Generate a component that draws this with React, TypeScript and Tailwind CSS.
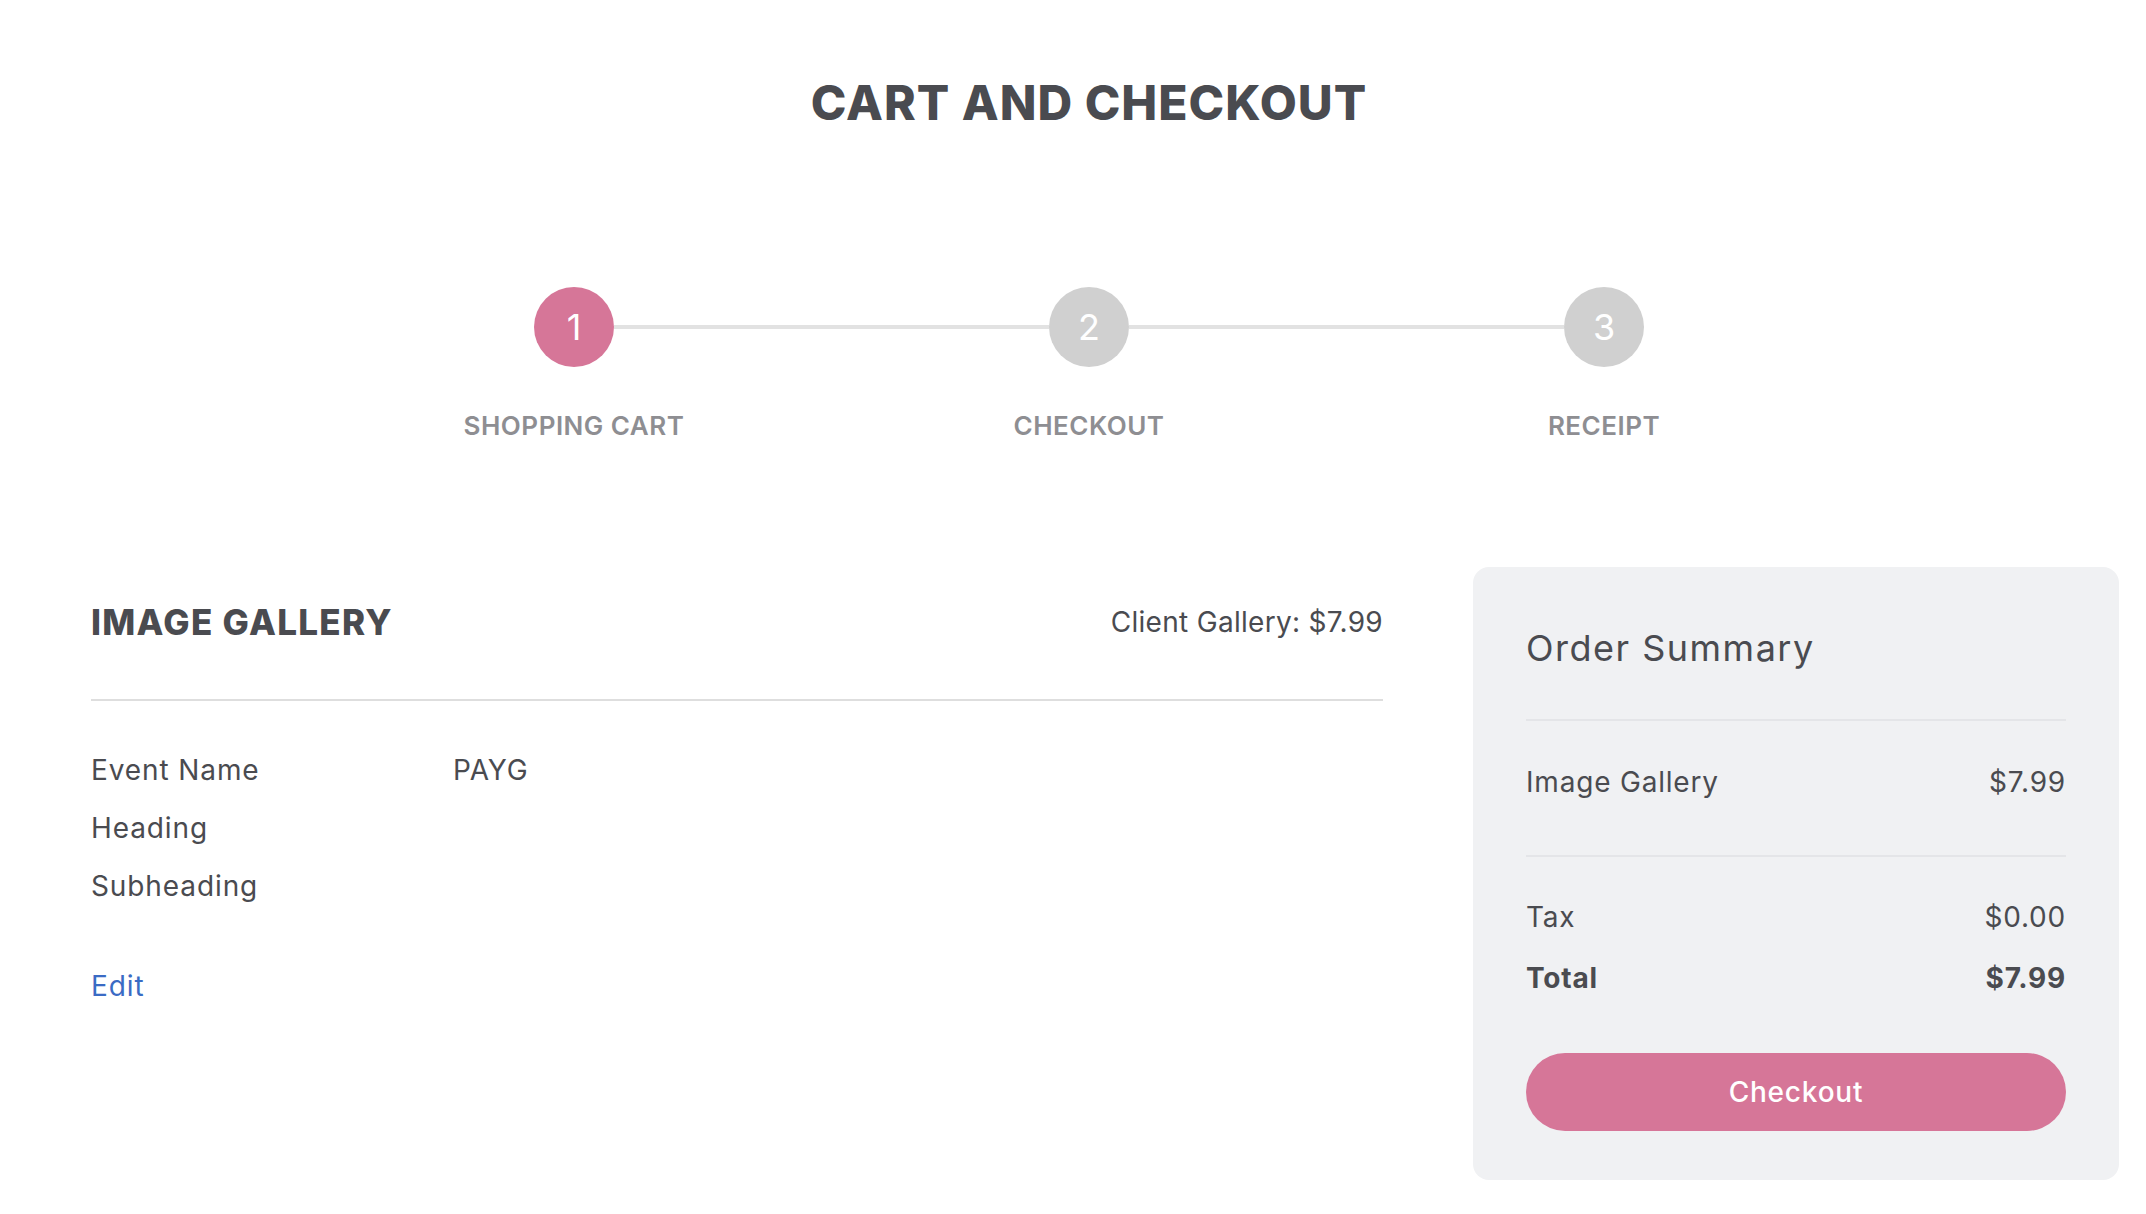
import React from 'react';

const steps = [
  { n: 1, label: 'SHOPPING CART', active: true },
  { n: 2, label: 'CHECKOUT', active: false },
  { n: 3, label: 'RECEIPT', active: false },
];

const details = [
  { label: 'Event Name', value: 'PAYG' },
  { label: 'Heading', value: '' },
  { label: 'Subheading', value: '' },
];

const Stepper: React.FC = () => (
  <div className="mx-auto mt-[154px] flex w-[1545px]">
    {steps.map((s, i) => (
      <div key={s.n} className="flex w-[515px] flex-col items-center">
        <div className="flex w-full items-center">
          <div className={`h-[4px] flex-1 ${i === 0 ? 'bg-transparent' : 'bg-[#e2e2e2]'}`} />
          <div
            className={`flex h-[80px] w-[80px] items-center justify-center rounded-full text-[36px] font-normal text-white ${
              s.active ? 'bg-[#d67698]' : 'bg-[#d0d0d0]'
            }`}
          >
            {s.n}
          </div>
          <div className={`h-[4px] flex-1 ${i === steps.length - 1 ? 'bg-transparent' : 'bg-[#e2e2e2]'}`} />
        </div>
        <div className="mt-[43px] text-[26px] leading-[32px] font-semibold tracking-[0.5px] text-[#8e8e92]">
          {s.label}
        </div>
      </div>
    ))}
  </div>
);

const SummaryRow: React.FC<{ label: string; value: string; bold?: boolean; className?: string }> = ({
  label,
  value,
  bold,
  className = '',
}) => (
  <div
    className={`flex items-center justify-between text-[28px] leading-[40px] tracking-[0.8px] ${
      bold ? 'font-bold' : ''
    } ${className}`}
  >
    <span>{label}</span>
    <span>{value}</span>
  </div>
);

export default function App() {
  return (
    <div className="min-h-screen w-full bg-white font-['Inter',sans-serif] text-[#4a4b50]">
      <div className="pl-[32px]">
        <h1 className="pt-[73px] text-center text-[48px] leading-[60px] font-extrabold tracking-[1px] text-[#4a4b50]">
          CART AND CHECKOUT
        </h1>
        <Stepper />
      </div>

      <div className="mt-[125px] flex gap-[90px] pr-[27px] pl-[91px] pb-[35px]">
        {/* cart item */}
        <div className="w-[1292px]">
          <div className="flex items-center justify-between pt-[33px]">
            <h2 className="text-[35px] leading-[44px] font-extrabold tracking-[1.3px]">IMAGE GALLERY</h2>
            <span className="text-[28px] leading-[44px] tracking-[0.3px]">Client Gallery: $7.99</span>
          </div>
          <div className="mt-[55px] h-[2px] bg-[#dedede]" />
          <div className="mt-[40px]">
            {details.map((d) => (
              <div key={d.label} className="flex text-[28px] leading-[58px] tracking-[0.9px]">
                <span className="w-[362px]">{d.label}</span>
                <span>{d.value}</span>
              </div>
            ))}
          </div>
          <a href="#" className="mt-[42px] block text-[28px] leading-[58px] tracking-[0.9px] text-[#3a6bc4]">
            Edit
          </a>
        </div>

        {/* order summary */}
        <div className="w-[646px] rounded-[16px] bg-[#f0f1f3] px-[53px] pt-[59px] pb-[49px]">
          <h3 className="text-[36px] leading-[44px] tracking-[1.5px]">Order Summary</h3>
          <div className="mt-[49px] h-[2px] bg-[#e4e5e8]" />
          <SummaryRow label="Image Gallery" value="$7.99" className="mt-[41px]" />
          <div className="mt-[53px] h-[2px] bg-[#e4e5e8]" />
          <SummaryRow label="Tax" value="$0.00" className="mt-[40px]" />
          <SummaryRow label="Total" value="$7.99" bold className="mt-[21px]" />
          <button className="mt-[55px] flex h-[78px] w-full items-center justify-center rounded-full bg-[#d67698] text-[28px] font-medium tracking-[0.8px] text-white">
            Checkout
          </button>
        </div>
      </div>
    </div>
  );
}
